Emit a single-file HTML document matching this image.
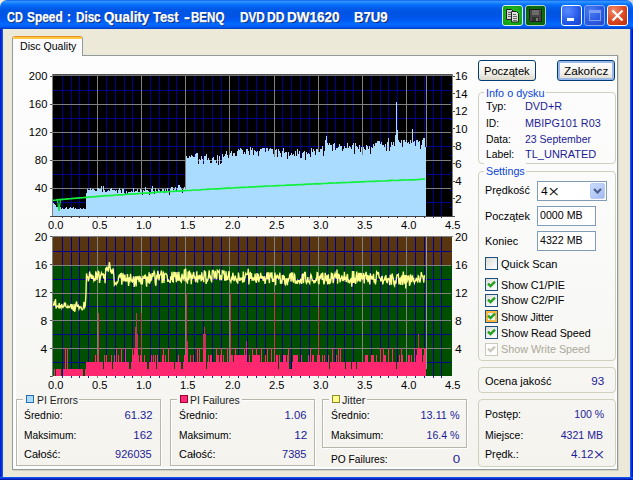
<!DOCTYPE html>
<html><head><meta charset="utf-8"><title>CD Speed : Disc Quality Test</title>
<style>
html,body{margin:0;padding:0}
body{width:633px;height:480px;overflow:hidden;background:#ece9d8;position:relative;font-family:"Liberation Sans",sans-serif;font-size:11px;color:#000}
.abs,.t,.tw,.gb,.cb,.inp,.btn,.sq{position:absolute;box-sizing:border-box}
.t{line-height:14px;height:14px;white-space:nowrap;color:#000}
.t.v{color:#1c1c96}
.t.gt{color:#0a46d8;background:transparent}
.t.dis{color:#aca899}
.t.ax{color:#000}
.t.st{color:#222}
.t.xx{font-size:19px;font-family:'Liberation Serif',serif}
.tw{top:8px;line-height:18px;font-weight:bold;font-size:14px;color:#fff;-webkit-text-stroke:0.25px #fff;text-shadow:1px 1px 0 #0a246a;white-space:nowrap}
#tb{left:0;top:0;width:633px;height:29px;border-radius:7px 7px 0 0;background:linear-gradient(#0058ee 0%,#3593ff 4%,#288eff 8%,#127dff 12%,#036ffc 17%,#0262ee 24%,#0057e5 34%,#0054e3 48%,#0055eb 60%,#005bf5 72%,#026afe 82%,#0061fc 90%,#0055ea 94%,#0048d5 97%,#003dc0 100%)}
#bl{left:0;top:29px;width:3px;height:451px;background:linear-gradient(90deg,#0019cf,#0831d9,#166aee)}
#br{left:630px;top:29px;width:3px;height:451px;background:linear-gradient(90deg,#166aee,#0831d9,#00138c)}
#bb{left:0;top:477px;width:633px;height:3px;background:linear-gradient(#166aee,#0831d9,#00138c)}
#panel{left:12px;top:55px;width:606px;height:415px;border:1px solid #919b9c;background:linear-gradient(#fdfdfe 0%,#fafaf9 45%,#f4f3ee 100%);box-shadow:1px 1px 0 #d5d2c3, inset 3px 0 0 #fdfdfd, inset -2px -2px 0 #fdfdfd}
#tab{left:12px;top:36px;width:71px;height:20px;border:1px solid #919b9c;border-bottom:none;border-top:none;border-radius:3px 3px 0 0;background:#fcfcfe;overflow:hidden}
#tab:before{content:"";position:absolute;left:0;top:0;width:100%;height:1px;background:#e68b2c}
#tab:after{content:"";position:absolute;left:0;top:1px;width:100%;height:2px;background:#ffc73c}
.gb{border:1px solid #d0d0bf;border-radius:4px;background:transparent}
.gbs{position:absolute;box-sizing:border-box;border:1px solid #b8b6a8;box-shadow:1px 1px 0 #fff, inset 1px 1px 0 #fff;background:transparent}
.mask{position:absolute;background:#f6f5f1}
.inp{border:1px solid #7f9db9;background:#fff}
.cb{width:13px;height:13px;border:1px solid #1c5180;background:linear-gradient(135deg,#dcdcd7,#fff)}
.cb.hot{border-color:#1c5180;box-shadow:inset 0 0 0 2px #f9b93c}
.cb.dis{border-color:#cac8bb;background:#fff}
.cb svg{position:absolute;left:0;top:0}
.btn{border:1px solid #003c74;border-radius:3px;background:linear-gradient(#fff 0%,#f3f2ec 60%,#dcd9cb 100%)}
.btn.def{box-shadow:inset 0 0 0 2px #9ab7ea}
.sq{width:8px;height:8px;border:1px solid}
.wb{position:absolute;box-sizing:border-box;top:5px;width:21px;height:21px;border:1px solid #fff;border-radius:3px}
svg.charts{position:absolute;left:0;top:0}
</style></head><body>
<div class="abs" style="left:0;top:0;width:7px;height:7px;background:#f6efd6"></div><div class="abs" style="left:626px;top:0;width:7px;height:7px;background:#d6d6de"></div>
<div id="tb" class="abs"></div>
<div id="bl" class="abs"></div><div id="br" class="abs"></div><div id="bb" class="abs"></div>
<span class="tw" id="w0" style="left:6.5px;transform-origin:0 0;transform:scaleX(0.7808)">CD</span><span class="tw" id="w1" style="left:26.6px;transform-origin:0 0;transform:scaleX(0.8497)">Speed</span><span class="tw" id="w2" style="left:67.3px;transform-origin:0 0;transform:scaleX(0.8562)">:</span><span class="tw" id="w3" style="left:75.7px;transform-origin:0 0;transform:scaleX(0.8317)">Disc</span><span class="tw" id="w4" style="left:103.8px;transform-origin:0 0;transform:scaleX(0.9522)">Quality</span><span class="tw" id="w5" style="left:153.10000000000002px;transform-origin:0 0;transform:scaleX(0.9225)">Test</span><span class="tw" id="w6" style="left:183.5px;transform-origin:0 0;transform:scaleX(1.2629)">-</span><span class="tw" id="w7" style="left:191.10000000000002px;transform-origin:0 0;transform:scaleX(0.8256)">BENQ</span><span class="tw" id="w8" style="left:239.5px;transform-origin:0 0;transform:scaleX(0.8389)">DVD</span><span class="tw" id="w9" style="left:266.90000000000003px;transform-origin:0 0;transform:scaleX(0.8649)">DD</span><span class="tw" id="w10" style="left:287.0px;transform-origin:0 0;transform:scaleX(0.9639)">DW1620</span><span class="tw" id="w11" style="left:354.2px;transform-origin:0 0;transform:scaleX(0.9386)">B7U9</span>
<div class="wb" style="left:502px;background:radial-gradient(circle at 50% 45%,#2cc42c,#0b980f);border-color:#dcf0dc">
<svg width="19" height="19" viewBox="0 0 19 19" style="position:absolute;left:0;top:0"><path d="M3.500,3.500h5l2,2v8h-7z" fill="#cfcfcf" stroke="#222"/><path d="M5,6.500h3M5,8.500h4M5,10.500h4" stroke="#6a6a6a" stroke-width="1"/><path d="M8.500,5.500h5l2,2v8.500h-7z" fill="#dcdcdc" stroke="#222"/><path d="M10,8.500h3M10,10.500h4M10,12.500h4M10,14.500h4" stroke="#6a6a6a" stroke-width="1"/></svg></div>
<div class="wb" style="left:525px;background:radial-gradient(circle at 50% 50%,#138a13,#06580a);border-color:#b4d4c0">
<svg width="19" height="19" viewBox="0 0 19 19" style="position:absolute;left:0;top:0"><path d="M3.500,3.500h12v12h-11l-1,-1z" fill="#474747" stroke="#1c1c1c"/><rect x="6" y="4" width="7" height="5" fill="#6c6c6c"/><rect x="6" y="11" width="7" height="4" fill="#303030"/><rect x="10" y="12" width="2" height="3" fill="#7a7a7a"/><rect x="14" y="4" width="1" height="1" fill="#2a9a2a"/></svg></div>
<div class="wb" style="left:561px;background:radial-gradient(circle at 30% 25%,#5a8cff,#2458e8 60%,#1a3fc8)"><div class="abs" style="left:5px;top:12px;width:7px;height:3px;background:#fff"></div></div>
<div class="wb" style="left:584px;background:radial-gradient(circle at 30% 25%,#4a7cf6,#2a5ae0 60%,#2347c8);border-color:#8aa8ee"><div class="abs" style="left:4px;top:4px;width:12px;height:11px;border:1px solid #7fa0f0;border-top-width:3px"></div></div>
<div class="wb" style="left:607px;background:radial-gradient(circle at 30% 25%,#f0896a,#d8441c 60%,#b8300c)"><svg width="19" height="19" style="position:absolute;left:0;top:0"><path d="M4.500,4.500l10,10M14.500,4.500l-10,10" stroke="#fff" stroke-width="2.2" stroke-linecap="butt"/></svg></div>

<div id="panel" class="abs"></div>
<div id="tab" class="abs"></div>

<div class="btn" style="left:478px;top:60px;width:58px;height:21px"></div>
<div class="btn def" style="left:557px;top:60px;width:58px;height:21px"></div>

<div class="gb" style="left:478px;top:92px;width:138px;height:72px"></div>
<div class="mask" style="left:484px;top:88px;width:62px;height:10px;background:#fcfcfd"></div>
<div class="gb" style="left:478px;top:171px;width:138px;height:190px"></div>
<div class="mask" style="left:484px;top:163px;width:42px;height:14px;background:#fbfbfb"></div>
<div class="gb" style="left:478px;top:367px;width:138px;height:26px"></div>
<div class="gb" style="left:478px;top:399px;width:138px;height:68px"></div>

<div class="inp" style="left:537px;top:181px;width:70px;height:20px"><div class="abs" style="right:1px;top:1px;width:15px;height:16px;border-radius:2px;background:linear-gradient(135deg,#cadafd,#b4c9f8 60%,#9fb9f0);border:1px solid #b9ccf6"><svg width="13" height="14" style="position:absolute;left:0;top:0"><path d="M3,5l3.500,3.500l3.500,-3.500" fill="none" stroke="#4a5e86" stroke-width="2.200"/></svg></div></div>
<div class="inp" style="left:537px;top:206px;width:59px;height:20px"></div>
<div class="inp" style="left:537px;top:231px;width:59px;height:20px"></div>

<div class="cb" style="left:485px;top:257px"></div>
<div class="cb" style="left:485px;top:278px"><svg width="11" height="11"><path d="M2,4.600l2.500,2.500l4.500,-4.500" fill="none" stroke="#21a121" stroke-width="2.300"/></svg></div>
<div class="cb" style="left:485px;top:294px"><svg width="11" height="11"><path d="M2,4.600l2.500,2.500l4.500,-4.500" fill="none" stroke="#21a121" stroke-width="2.300"/></svg></div>
<div class="cb hot" style="left:485px;top:310px"><svg width="11" height="11"><path d="M2,4.600l2.500,2.500l4.500,-4.500" fill="none" stroke="#21a121" stroke-width="2.300"/></svg></div>
<div class="cb" style="left:485px;top:326px"><svg width="11" height="11"><path d="M2,4.600l2.500,2.500l4.500,-4.500" fill="none" stroke="#21a121" stroke-width="2.300"/></svg></div>
<div class="cb dis" style="left:485px;top:343px"><svg width="11" height="11"><path d="M2,4.600l2.500,2.500l4.500,-4.500" fill="none" stroke="#cac8bb" stroke-width="2.300"/></svg></div>

<div class="gbs" style="left:16px;top:399px;width:145px;height:67px"></div>
<div class="mask" style="left:23px;top:398px;width:56px;height:3px"></div>
<div class="gbs" style="left:170px;top:399px;width:145px;height:67px"></div>
<div class="mask" style="left:177px;top:398px;width:65px;height:3px"></div>
<div class="gbs" style="left:322px;top:399px;width:145px;height:49px"></div>
<div class="mask" style="left:329px;top:398px;width:38px;height:3px"></div>
<div class="sq" style="left:26px;top:395px;background:#aadcff;border-color:#2a6cb0"></div>
<div class="sq" style="left:180px;top:395px;background:#ff2a75;border-color:#a00030"></div>
<div class="sq" style="left:332px;top:395px;background:#ffff8c;border-color:#8c8c28"></div>

<svg class="charts" width="633" height="480" viewBox="0 0 633 480" shape-rendering="crispEdges"><rect x="53" y="74" width="399" height="142" fill="#000"/><rect x="62" y="76" width="1" height="140" fill="#00008c"/><rect x="71" y="76" width="1" height="140" fill="#00008c"/><rect x="79" y="76" width="1" height="140" fill="#00008c"/><rect x="88" y="76" width="1" height="140" fill="#00008c"/><rect x="106" y="76" width="1" height="140" fill="#00008c"/><rect x="115" y="76" width="1" height="140" fill="#00008c"/><rect x="124" y="76" width="1" height="140" fill="#00008c"/><rect x="132" y="76" width="1" height="140" fill="#00008c"/><rect x="150" y="76" width="1" height="140" fill="#00008c"/><rect x="159" y="76" width="1" height="140" fill="#00008c"/><rect x="168" y="76" width="1" height="140" fill="#00008c"/><rect x="176" y="76" width="1" height="140" fill="#00008c"/><rect x="194" y="76" width="1" height="140" fill="#00008c"/><rect x="203" y="76" width="1" height="140" fill="#00008c"/><rect x="212" y="76" width="1" height="140" fill="#00008c"/><rect x="221" y="76" width="1" height="140" fill="#00008c"/><rect x="238" y="76" width="1" height="140" fill="#00008c"/><rect x="247" y="76" width="1" height="140" fill="#00008c"/><rect x="256" y="76" width="1" height="140" fill="#00008c"/><rect x="265" y="76" width="1" height="140" fill="#00008c"/><rect x="282" y="76" width="1" height="140" fill="#00008c"/><rect x="291" y="76" width="1" height="140" fill="#00008c"/><rect x="300" y="76" width="1" height="140" fill="#00008c"/><rect x="309" y="76" width="1" height="140" fill="#00008c"/><rect x="327" y="76" width="1" height="140" fill="#00008c"/><rect x="335" y="76" width="1" height="140" fill="#00008c"/><rect x="344" y="76" width="1" height="140" fill="#00008c"/><rect x="353" y="76" width="1" height="140" fill="#00008c"/><rect x="371" y="76" width="1" height="140" fill="#00008c"/><rect x="380" y="76" width="1" height="140" fill="#00008c"/><rect x="388" y="76" width="1" height="140" fill="#00008c"/><rect x="397" y="76" width="1" height="140" fill="#00008c"/><rect x="415" y="76" width="1" height="140" fill="#00008c"/><rect x="424" y="76" width="1" height="140" fill="#00008c"/><rect x="433" y="76" width="1" height="140" fill="#00008c"/><rect x="441" y="76" width="1" height="140" fill="#00008c"/><rect x="53" y="90" width="398" height="1" fill="#00008c"/><rect x="53" y="118" width="398" height="1" fill="#00008c"/><rect x="53" y="146" width="398" height="1" fill="#00008c"/><rect x="53" y="174" width="398" height="1" fill="#00008c"/><rect x="53" y="202" width="398" height="1" fill="#00008c"/><rect x="97" y="76" width="1" height="140" fill="#808080"/><rect x="141" y="76" width="1" height="140" fill="#808080"/><rect x="185" y="76" width="1" height="140" fill="#808080"/><rect x="229" y="76" width="1" height="140" fill="#808080"/><rect x="274" y="76" width="1" height="140" fill="#808080"/><rect x="318" y="76" width="1" height="140" fill="#808080"/><rect x="362" y="76" width="1" height="140" fill="#808080"/><rect x="406" y="76" width="1" height="140" fill="#808080"/><rect x="53" y="104" width="398" height="1" fill="#808080"/><rect x="53" y="132" width="398" height="1" fill="#808080"/><rect x="53" y="160" width="398" height="1" fill="#808080"/><rect x="53" y="188" width="398" height="1" fill="#808080"/><rect x="426" y="76" width="1" height="71" fill="#8c8c8c"/><path d="M53,216V203H54V204H55V205H56V207H57V207H58V207H59V208H60V207H61V209H62V208H63V209H64V209H65V208H66V207H67V209H68V209H69V208H70V207H71V208H72V208H73V207H74V209H75V208H76V209H77V209H78V209H79V209H80V208H81V209H82V209H83V208H84V209H85V209H86V193H87V189H88V190H89V190H90V188H91V190H92V189H93V189H94V190H95V191H96V191H97V188H98V188H99V189H100V189H101V186H102V192H103V186H104V190H105V192H106V192H107V191H108V190H109V191H110V189H111V188H112V190H113V190H114V190H115V191H116V190H117V193H118V190H119V188H120V190H121V193H122V189H123V189H124V193H125V194H126V191H127V194H128V192H129V192H130V192H131V191H132V192H133V188H134V192H135V191H136V191H137V189H138V192H139V192H140V189H141V190H142V195H143V190H144V191H145V187H146V190H147V190H148V191H149V195H150V192H151V189H152V186H153V191H154V194H155V188H156V191H157V193H158V189H159V190H160V192H161V191H162V189H163V189H164V193H165V189H166V192H167V188H168V191H169V195H170V189H171V187H172V187H173V190H174V189H175V187H176V192H177V188H178V185H179V185H180V187H181V189H182V193H183V189H184V187H185V189H186V156H187V158H188V158H189V156H190V157H191V155H192V156H193V157H194V157H195V154H196V153H197V153H198V164H199V159H200V160H201V156H202V159H203V164H204V156H205V156H206V154H207V160H208V158H209V160H210V163H211V163H212V158H213V157H214V160H215V160H216V163H217V155H218V165H219V156H220V164H221V163H222V154H223V157H224V156H225V154H226V151H227V155H228V158H229V155H230V153H231V151H232V156H233V153H234V153H235V156H236V156H237V151H238V149H239V150H240V148H241V149H242V150H243V154H244V152H245V154H246V149H247V149H248V151H249V155H250V147H251V150H252V148H253V155H254V150H255V151H256V152H257V151H258V156H259V151H260V149H261V149H262V148H263V148H264V148H265V152H266V148H267V148H268V151H269V149H270V148H271V149H272V149H273V154H274V157H275V150H276V149H277V157H278V149H279V151H280V153H281V157H282V151H283V148H284V153H285V152H286V152H287V159H288V152H289V156H290V155H291V153H292V155H293V154H294V156H295V151H296V156H297V149H298V154H299V151H300V158H301V158H302V153H303V152H304V151H305V160H306V152H307V154H308V153H309V154H310V157H311V148H312V152H313V149H314V151H315V155H316V149H317V149H318V152H319V152H320V149H321V149H322V146H323V156H324V151H325V140H326V136H327V143H328V145H329V143H330V145H331V145H332V151H333V144H334V143H335V150H336V148H337V148H338V147H339V144H340V146H341V146H342V151H343V149H344V146H345V148H346V148H347V143H348V148H349V146H350V147H351V149H352V145H353V143H354V154H355V143H356V146H357V147H358V149H359V145H360V152H361V147H362V155H363V147H364V149H365V150H366V145H367V146H368V149H369V146H370V154H371V147H372V148H373V144H374V146H375V143H376V143H377V141H378V141H379V141H380V144H381V142H382V145H383V145H384V147H385V144H386V151H387V142H388V138H389V151H390V147H391V142H392V145H393V142H394V146H395V135H396V102H397V130H398V140H399V142H400V143H401V140H402V147H403V140H404V140H405V142H406V140H407V143H408V142H409V144H410V140H411V143H412V129H413V142H414V141H415V146H416V140H417V140H418V142H419V141H420V149H421V145H422V140H423V138H424V138H425V147H426V216Z" fill="#aadcff"/><polyline points="53,200.3 56,200.0 59,199.6 62,199.4 65,199.2 68,198.9 71,198.7 74,198.4 77,198.1 80,197.8 83,197.7 86,197.3 89,197.1 92,196.9 95,196.7 98,196.3 101,196.1 104,195.9 107,195.7 110,195.6 113,195.3 116,195.0 119,194.8 122,194.8 125,194.5 128,194.2 131,194.1 134,193.9 137,193.8 140,193.3 143,193.2 146,193.1 149,192.9 152,192.8 155,192.4 158,192.2 161,192.0 164,191.8 167,191.8 170,191.5 173,191.4 176,191.1 179,191.1 182,190.8 185,190.6 188,190.5 191,190.4 194,190.0 197,190.0 200,189.8 203,189.5 206,189.4 209,189.2 212,189.0 215,188.9 218,188.8 221,188.6 224,188.4 227,188.2 230,188.1 233,188.0 236,187.7 239,187.6 242,187.4 245,187.4 248,187.2 251,186.9 254,186.8 257,186.7 260,186.6 263,186.4 266,186.2 269,186.0 272,186.0 275,185.8 278,185.6 281,185.5 284,185.5 287,185.2 290,185.1 293,184.9 296,184.8 299,184.7 302,184.6 305,184.3 308,184.2 311,184.1 314,183.9 317,183.7 320,183.8 323,183.5 326,183.5 329,183.2 332,183.2 335,183.0 338,182.8 341,182.6 344,182.6 347,182.5 350,182.4 353,182.1 356,182.1 359,181.9 362,181.8 365,181.6 368,181.5 371,181.4 374,181.4 377,181.1 380,181.0 383,181.0 386,180.9 389,180.6 392,180.4 395,180.5 398,180.4 401,180.1 404,179.9 407,180.0 410,179.8 413,179.8 416,179.6 419,179.5 422,179.2 425,179.2" fill="none" stroke="#10f03c" stroke-width="1.7" shape-rendering="auto"/><polyline points="57.500,200 59,211 60.500,199.500" fill="none" stroke="#10e040" stroke-width="1.300" shape-rendering="auto"/><rect x="52" y="74" width="401" height="1" fill="#505050"/><rect x="52" y="75" width="401" height="1" fill="#707070"/><rect x="52" y="74" width="1" height="143" fill="#808080"/><rect x="452" y="74" width="1" height="143" fill="#808080"/><rect x="52" y="216" width="401" height="1" fill="#404040"/><rect x="50" y="76" width="2" height="1" fill="#505050"/><rect x="50" y="104" width="2" height="1" fill="#505050"/><rect x="50" y="132" width="2" height="1" fill="#505050"/><rect x="50" y="160" width="2" height="1" fill="#505050"/><rect x="50" y="188" width="2" height="1" fill="#505050"/><rect x="50" y="216" width="2" height="1" fill="#505050"/><rect x="453" y="76" width="2" height="1" fill="#505050"/><rect x="453" y="93" width="2" height="1" fill="#505050"/><rect x="453" y="111" width="2" height="1" fill="#505050"/><rect x="453" y="128" width="2" height="1" fill="#505050"/><rect x="453" y="146" width="2" height="1" fill="#505050"/><rect x="453" y="163" width="2" height="1" fill="#505050"/><rect x="453" y="181" width="2" height="1" fill="#505050"/><rect x="453" y="198" width="2" height="1" fill="#505050"/><rect x="453" y="216" width="2" height="1" fill="#505050"/><rect x="450" y="84" width="2" height="1" fill="#0000a0"/><rect x="450" y="102" width="2" height="1" fill="#0000a0"/><rect x="450" y="119" width="2" height="1" fill="#0000a0"/><rect x="450" y="137" width="2" height="1" fill="#0000a0"/><rect x="450" y="155" width="2" height="1" fill="#0000a0"/><rect x="450" y="172" width="2" height="1" fill="#0000a0"/><rect x="450" y="190" width="2" height="1" fill="#0000a0"/><rect x="450" y="207" width="2" height="1" fill="#0000a0"/><rect x="53" y="237" width="399" height="139" fill="#004e00"/><rect x="53" y="237" width="399" height="28" fill="#563510"/><rect x="62" y="237" width="1" height="139" fill="#00008c"/><rect x="71" y="237" width="1" height="139" fill="#00008c"/><rect x="79" y="237" width="1" height="139" fill="#00008c"/><rect x="88" y="237" width="1" height="139" fill="#00008c"/><rect x="106" y="237" width="1" height="139" fill="#00008c"/><rect x="115" y="237" width="1" height="139" fill="#00008c"/><rect x="124" y="237" width="1" height="139" fill="#00008c"/><rect x="132" y="237" width="1" height="139" fill="#00008c"/><rect x="150" y="237" width="1" height="139" fill="#00008c"/><rect x="159" y="237" width="1" height="139" fill="#00008c"/><rect x="168" y="237" width="1" height="139" fill="#00008c"/><rect x="176" y="237" width="1" height="139" fill="#00008c"/><rect x="194" y="237" width="1" height="139" fill="#00008c"/><rect x="203" y="237" width="1" height="139" fill="#00008c"/><rect x="212" y="237" width="1" height="139" fill="#00008c"/><rect x="221" y="237" width="1" height="139" fill="#00008c"/><rect x="238" y="237" width="1" height="139" fill="#00008c"/><rect x="247" y="237" width="1" height="139" fill="#00008c"/><rect x="256" y="237" width="1" height="139" fill="#00008c"/><rect x="265" y="237" width="1" height="139" fill="#00008c"/><rect x="282" y="237" width="1" height="139" fill="#00008c"/><rect x="291" y="237" width="1" height="139" fill="#00008c"/><rect x="300" y="237" width="1" height="139" fill="#00008c"/><rect x="309" y="237" width="1" height="139" fill="#00008c"/><rect x="327" y="237" width="1" height="139" fill="#00008c"/><rect x="335" y="237" width="1" height="139" fill="#00008c"/><rect x="344" y="237" width="1" height="139" fill="#00008c"/><rect x="353" y="237" width="1" height="139" fill="#00008c"/><rect x="371" y="237" width="1" height="139" fill="#00008c"/><rect x="380" y="237" width="1" height="139" fill="#00008c"/><rect x="388" y="237" width="1" height="139" fill="#00008c"/><rect x="397" y="237" width="1" height="139" fill="#00008c"/><rect x="415" y="237" width="1" height="139" fill="#00008c"/><rect x="424" y="237" width="1" height="139" fill="#00008c"/><rect x="433" y="237" width="1" height="139" fill="#00008c"/><rect x="441" y="237" width="1" height="139" fill="#00008c"/><rect x="53" y="251" width="398" height="1" fill="#00008c"/><rect x="53" y="279" width="398" height="1" fill="#00008c"/><rect x="53" y="306" width="398" height="1" fill="#00008c"/><rect x="53" y="334" width="398" height="1" fill="#00008c"/><rect x="53" y="362" width="398" height="1" fill="#00008c"/><rect x="97" y="237" width="1" height="139" fill="#808080"/><rect x="141" y="237" width="1" height="139" fill="#808080"/><rect x="185" y="237" width="1" height="139" fill="#808080"/><rect x="229" y="237" width="1" height="139" fill="#808080"/><rect x="274" y="237" width="1" height="139" fill="#808080"/><rect x="318" y="237" width="1" height="139" fill="#808080"/><rect x="362" y="237" width="1" height="139" fill="#808080"/><rect x="406" y="237" width="1" height="139" fill="#808080"/><rect x="53" y="265" width="398" height="1" fill="#808080"/><rect x="53" y="293" width="398" height="1" fill="#808080"/><rect x="53" y="320" width="398" height="1" fill="#808080"/><rect x="53" y="348" width="398" height="1" fill="#808080"/><rect x="426" y="237" width="1" height="132" fill="#9a9a9a"/><path d="M53,376V376H54V369H55V376H56V369H57V369H58V369H59V369H60V369H61V376H62V376H63V369H64V369H65V348H66V369H67V348H68V369H69V369H70V369H71V369H72V369H73V369H74V369H75V369H76V369H77V369H78V369H79V369H80V369H81V369H82V369H83V376H84V376H85V369H86V362H87V362H88V362H89V362H90V362H91V362H92V362H93V362H94V362H95V355H96V362H97V355H98V313H99V362H100V362H101V362H102V362H103V369H104V355H105V362H106V355H107V362H108V362H109V362H110V362H111V355H112V369H113V362H114V355H115V362H116V348H117V362H118V355H119V362H120V362H121V348H122V362H123V362H124V362H125V348H126V362H127V362H128V362H129V369H130V369H131V362H132V348H133V355H134V348H135V327H136V313H137V334H138V355H139V362H140V355H141V313H142V362H143V362H144V355H145V362H146V362H147V369H148V369H149V362H150V362H151V355H152V362H153V355H154V362H155V355H156V369H157V355H158V362H159V362H160V362H161V362H162V355H163V348H164V362H165V355H166V362H167V362H168V348H169V362H170V362H171V362H172V362H173V362H174V369H175V362H176V362H177V362H178V355H179V362H180V362H181V369H182V369H183V362H184V355H185V355H186V293H187V341H188V362H189V362H190V355H191V362H192V362H193V355H194V362H195V362H196V362H197V348H198V362H199V348H200V362H201V362H202V362H203V334H204V327H205V334H206V369H207V362H208V355H209V362H210V355H211V355H212V362H213V362H214V362H215V362H216V348H217V355H218V355H219V362H220V355H221V348H222V362H223V355H224V362H225V362H226V362H227V348H228V362H229V362H230V293H231V355H232V355H233V362H234V355H235V348H236V355H237V355H238V355H239V355H240V355H241V355H242V355H243V355H244V348H245V355H246V341H247V362H248V362H249V355H250V362H251V362H252V348H253V355H254V355H255V355H256V348H257V355H258V355H259V355H260V362H261V348H262V362H263V362H264V362H265V355H266V362H267V348H268V362H269V362H270V362H271V348H272V362H273V362H274V293H275V362H276V355H277V355H278V369H279V355H280V362H281V362H282V362H283V355H284V355H285V355H286V362H287V355H288V348H289V369H290V369H291V369H292V362H293V355H294V355H295V355H296V355H297V355H298V362H299V362H300V362H301V355H302V362H303V362H304V362H305V362H306V362H307V362H308V355H309V362H310V348H311V362H312V355H313V355H314V362H315V362H316V362H317V355H318V306H319V355H320V362H321V362H322V355H323V362H324V355H325V362H326V362H327V362H328V355H329V369H330V362H331V362H332V348H333V362H334V362H335V362H336V355H337V362H338V348H339V362H340V348H341V362H342V362H343V362H344V362H345V369H346V362H347V362H348V362H349V362H350V362H351V369H352V362H353V362H354V362H355V362H356V369H357V362H358V362H359V362H360V362H361V362H362V362H363V362H364V362H365V355H366V355H367V355H368V362H369V362H370V362H371V355H372V355H373V355H374V362H375V362H376V355H377V362H378V362H379V362H380V348H381V362H382V362H383V348H384V355H385V355H386V362H387V362H388V348H389V362H390V362H391V362H392V348H393V362H394V362H395V362H396V369H397V362H398V362H399V355H400V362H401V348H402V355H403V362H404V362H405V362H406V362H407V362H408V355H409V355H410V362H411V355H412V362H413V362H414V348H415V362H416V355H417V348H418V334H419V348H420V348H421V348H422V362H423V355H424V348H425V348H426V376Z" fill="#ff2870"/><rect x="98" y="313" width="1" height="35" fill="#c8305c"/><rect x="135" y="327" width="1" height="21" fill="#c8305c"/><rect x="136" y="313" width="1" height="35" fill="#c8305c"/><rect x="137" y="334" width="1" height="14" fill="#c8305c"/><rect x="141" y="313" width="1" height="35" fill="#c8305c"/><rect x="186" y="293" width="1" height="55" fill="#c8305c"/><rect x="187" y="341" width="1" height="7" fill="#c8305c"/><rect x="203" y="334" width="1" height="14" fill="#c8305c"/><rect x="204" y="327" width="1" height="21" fill="#c8305c"/><rect x="205" y="334" width="1" height="14" fill="#c8305c"/><rect x="230" y="293" width="1" height="55" fill="#c8305c"/><rect x="246" y="341" width="1" height="7" fill="#c8305c"/><rect x="274" y="293" width="1" height="55" fill="#c8305c"/><rect x="318" y="306" width="1" height="42" fill="#c8305c"/><rect x="418" y="334" width="1" height="14" fill="#c8305c"/><polyline points="53.0,304.3 53.6,305.0 54.2,302.6 54.9,304.2 55.5,299.1 56.1,308.4 56.7,306.8 57.3,305.9 58.0,306.4 58.6,307.2 59.2,303.0 59.8,307.3 60.4,306.3 61.1,307.9 61.7,304.0 62.3,306.0 62.9,307.5 63.5,306.8 64.2,304.1 64.8,306.2 65.4,302.6 66.0,307.0 66.6,307.5 67.3,307.7 67.9,306.0 68.5,307.6 69.1,307.5 69.7,306.8 70.4,305.5 71.0,304.0 71.6,309.2 72.2,304.3 72.8,308.8 73.5,310.7 74.1,304.1 74.7,311.8 75.3,308.4 75.9,303.9 76.6,301.5 77.2,306.4 77.8,306.1 78.4,305.4 79.0,308.9 79.7,307.0 80.3,307.6 80.9,306.9 81.5,308.8 82.1,309.8 82.8,309.3 83.4,307.2 84.0,301.8 84.6,307.4 85.2,306.0 85.9,295.6 86.5,273.5 87.1,276.4 87.7,276.8 88.3,281.3 89.0,278.8 89.6,271.5 90.2,277.1 90.8,273.8 91.4,278.8 92.1,274.8 92.7,279.1 93.3,277.4 93.9,280.8 94.5,279.2 95.2,280.8 95.8,271.4 96.4,273.7 97.0,279.9 97.6,276.2 98.3,271.3 98.9,272.0 99.5,282.9 100.1,279.3 100.7,275.3 101.4,272.8 102.0,274.7 102.6,274.0 103.2,273.8 103.8,278.3 104.5,274.4 105.1,283.1 105.7,269.1 106.3,269.9 106.9,266.7 107.6,269.1 108.2,271.6 108.8,266.9 109.4,262.0 110.0,266.2 110.7,272.4 111.3,269.7 111.9,273.9 112.5,272.2 113.1,268.3 113.8,275.3 114.4,284.9 115.0,283.8 115.6,283.1 116.2,284.4 116.9,282.2 117.5,282.8 118.1,280.9 118.7,276.7 119.3,275.3 120.0,276.8 120.6,273.9 121.2,273.5 121.8,284.7 122.4,277.4 123.1,273.2 123.7,281.3 124.3,278.8 124.9,274.6 125.5,281.7 126.2,278.2 126.8,281.5 127.4,274.1 128.0,279.2 128.6,285.9 129.3,277.4 129.9,282.4 130.5,273.9 131.1,278.9 131.7,281.2 132.4,281.9 133.0,279.0 133.6,276.3 134.2,287.0 134.8,281.4 135.5,276.3 136.1,286.5 136.7,276.4 137.3,279.6 137.9,276.0 138.6,278.2 139.2,282.2 139.8,276.8 140.4,277.4 141.0,284.3 141.7,278.3 142.3,284.4 142.9,277.0 143.5,277.8 144.1,276.4 144.8,278.8 145.4,274.6 146.0,279.9 146.6,286.6 147.2,276.6 147.9,278.2 148.5,283.1 149.1,272.2 149.7,283.8 150.3,273.7 151.0,280.3 151.6,279.6 152.2,273.1 152.8,276.9 153.4,273.9 154.1,271.5 154.7,273.1 155.3,283.4 155.9,285.8 156.5,276.5 157.2,277.7 157.8,270.8 158.4,274.0 159.0,280.3 159.6,275.2 160.3,274.8 160.9,273.2 161.5,270.5 162.1,283.1 162.7,278.9 163.4,271.6 164.0,282.9 164.6,274.1 165.2,273.9 165.8,273.4 166.5,274.4 167.1,275.5 167.7,281.9 168.3,280.1 168.9,281.0 169.6,281.3 170.2,283.0 170.8,276.4 171.4,280.2 172.0,271.7 172.7,281.3 173.3,281.8 173.9,271.9 174.5,277.0 175.1,272.1 175.8,277.4 176.4,282.2 177.0,272.0 177.6,279.4 178.2,280.8 178.9,271.7 179.5,280.6 180.1,278.6 180.7,281.2 181.3,282.0 182.0,273.9 182.6,276.3 183.2,279.2 183.8,277.8 184.4,269.4 185.1,281.3 185.7,268.5 186.3,278.7 186.9,282.3 187.5,282.9 188.2,271.6 188.8,280.2 189.4,270.6 190.0,278.2 190.6,272.5 191.3,284.1 191.9,274.7 192.5,279.1 193.1,274.6 193.7,272.0 194.4,277.8 195.0,277.4 195.6,282.1 196.2,278.4 196.8,271.4 197.5,282.6 198.1,276.6 198.7,276.1 199.3,279.3 199.9,274.9 200.6,277.0 201.2,281.3 201.8,272.2 202.4,278.7 203.0,277.9 203.7,282.2 204.3,270.4 204.9,276.3 205.5,271.4 206.1,284.0 206.8,279.8 207.4,280.8 208.0,279.6 208.6,275.5 209.2,270.3 209.9,277.4 210.5,276.7 211.1,280.4 211.7,281.4 212.3,271.1 213.0,270.2 213.6,270.9 214.2,277.7 214.8,276.4 215.4,270.9 216.1,278.9 216.7,278.9 217.3,270.4 217.9,271.3 218.5,272.0 219.2,270.8 219.8,280.1 220.4,275.1 221.0,277.1 221.6,280.3 222.3,270.7 222.9,271.1 223.5,272.8 224.1,270.5 224.7,280.0 225.4,280.0 226.0,271.4 226.6,280.3 227.2,277.9 227.8,279.8 228.5,274.2 229.1,271.0 229.7,280.1 230.3,280.3 230.9,282.0 231.6,278.4 232.2,280.1 232.8,272.7 233.4,276.3 234.0,281.1 234.7,277.7 235.3,275.7 235.9,279.7 236.5,280.9 237.1,278.8 237.8,283.7 238.4,272.5 239.0,276.6 239.6,280.2 240.2,280.1 240.9,278.3 241.5,279.3 242.1,278.3 242.7,282.7 243.3,271.5 244.0,282.1 244.6,279.5 245.2,276.1 245.8,273.4 246.4,274.5 247.1,274.3 247.7,274.0 248.3,268.7 248.9,284.4 249.5,276.7 250.2,271.8 250.8,279.0 251.4,273.0 252.0,279.5 252.6,278.5 253.3,280.7 253.9,277.3 254.5,280.4 255.1,273.5 255.7,280.8 256.4,282.8 257.0,273.0 257.6,280.5 258.2,273.8 258.8,282.2 259.5,277.3 260.1,277.5 260.7,272.8 261.3,277.9 261.9,278.2 262.6,276.0 263.2,280.4 263.8,280.5 264.4,276.2 265.0,283.9 265.7,279.9 266.3,277.6 266.9,272.5 267.5,279.5 268.1,272.2 268.8,278.3 269.4,283.1 270.0,272.5 270.6,274.8 271.2,276.4 271.9,272.4 272.5,282.0 273.1,278.8 273.7,281.8 274.3,277.6 275.0,272.5 275.6,285.1 276.2,275.3 276.8,278.5 277.4,274.6 278.1,277.0 278.7,278.5 279.3,277.3 279.9,272.7 280.5,283.8 281.2,279.8 281.8,283.7 282.4,275.1 283.0,280.1 283.6,275.8 284.3,276.5 284.9,283.7 285.5,284.6 286.1,278.2 286.7,279.9 287.4,285.1 288.0,278.1 288.6,280.0 289.2,278.3 289.8,274.4 290.5,273.8 291.1,281.7 291.7,273.0 292.3,273.1 292.9,280.4 293.6,282.6 294.2,274.0 294.8,275.0 295.4,283.2 296.0,283.0 296.7,281.6 297.3,283.9 297.9,280.3 298.5,281.3 299.1,280.7 299.8,282.8 300.4,280.6 301.0,278.8 301.6,284.0 302.2,274.7 302.9,274.2 303.5,283.1 304.1,275.6 304.7,272.5 305.3,272.5 306.0,282.1 306.6,283.3 307.2,281.6 307.8,277.2 308.4,281.7 309.1,282.1 309.7,283.3 310.3,277.7 310.9,274.7 311.5,276.2 312.2,280.7 312.8,280.3 313.4,280.5 314.0,283.3 314.6,280.0 315.3,282.6 315.9,279.6 316.5,280.9 317.1,272.6 317.7,273.0 318.4,282.9 319.0,284.2 319.6,275.8 320.2,279.1 320.8,275.3 321.5,273.4 322.1,280.0 322.7,272.5 323.3,279.6 323.9,284.3 324.6,281.3 325.2,272.8 325.8,277.0 326.4,281.1 327.0,275.4 327.7,284.4 328.3,274.2 328.9,283.9 329.5,278.9 330.1,282.9 330.8,281.6 331.4,272.6 332.0,279.2 332.6,273.4 333.2,283.2 333.9,278.8 334.5,275.2 335.1,273.4 335.7,276.4 336.3,278.7 337.0,269.5 337.6,283.7 338.2,273.6 338.8,277.1 339.4,275.9 340.1,282.3 340.7,278.8 341.3,278.1 341.9,275.4 342.5,281.0 343.2,278.3 343.8,279.6 344.4,271.9 345.0,279.8 345.6,276.9 346.3,281.9 346.9,276.2 347.5,274.0 348.1,282.6 348.7,279.4 349.4,283.3 350.0,281.5 350.6,279.9 351.2,277.9 351.8,286.6 352.5,271.0 353.1,282.9 353.7,271.1 354.3,282.6 354.9,277.9 355.6,283.9 356.2,275.5 356.8,271.6 357.4,280.7 358.0,279.5 358.7,272.9 359.3,281.5 359.9,272.8 360.5,281.7 361.1,273.0 361.8,276.4 362.4,279.7 363.0,276.7 363.6,273.1 364.2,283.5 364.9,275.8 365.5,274.9 366.1,271.8 366.7,279.6 367.3,274.8 368.0,282.2 368.6,276.1 369.2,276.5 369.8,284.5 370.4,273.3 371.1,279.0 371.7,275.9 372.3,279.2 372.9,279.0 373.5,273.9 374.2,282.7 374.8,279.1 375.4,284.4 376.0,280.7 376.6,272.2 377.3,273.7 377.9,272.5 378.5,272.8 379.1,277.2 379.7,277.8 380.4,279.0 381.0,281.5 381.6,276.8 382.2,276.5 382.8,284.4 383.5,280.7 384.1,280.1 384.7,278.2 385.3,280.4 385.9,275.0 386.6,282.2 387.2,282.6 387.8,278.6 388.4,278.3 389.0,279.2 389.7,285.1 390.3,274.7 390.9,276.7 391.5,284.7 392.1,273.5 392.8,276.7 393.4,278.9 394.0,284.6 394.6,285.7 395.2,280.7 395.9,283.8 396.5,277.3 397.1,274.9 397.7,275.2 398.3,274.5 399.0,284.4 399.6,282.0 400.2,277.5 400.8,284.9 401.4,276.7 402.1,275.9 402.7,285.0 403.3,271.6 403.9,277.4 404.5,283.7 405.2,275.1 405.8,288.5 406.4,275.0 407.0,282.3 407.6,277.4 408.3,278.9 408.9,275.3 409.5,285.7 410.1,283.9 410.7,274.3 411.4,282.2 412.0,276.8 412.6,276.1 413.2,280.5 413.8,279.3 414.5,282.8 415.1,281.0 415.7,280.8 416.3,277.9 416.9,280.0 417.6,281.4 418.2,275.8 418.8,276.5 419.4,281.7 420.0,282.0 420.7,278.6 421.3,272.1 421.9,275.8 422.5,275.9 423.1,277.9 423.8,282.7 424.4,275.1" fill="none" stroke="#ffff90" stroke-width="1.350" shape-rendering="auto"/><rect x="52" y="236" width="401" height="1" fill="#808080"/><rect x="52" y="236" width="1" height="141" fill="#808080"/><rect x="50" y="236" width="2" height="1" fill="#505050"/><rect x="50" y="264" width="2" height="1" fill="#505050"/><rect x="50" y="292" width="2" height="1" fill="#505050"/><rect x="50" y="320" width="2" height="1" fill="#505050"/><rect x="50" y="348" width="2" height="1" fill="#505050"/><rect x="50" y="376" width="2" height="1" fill="#505050"/><rect x="62" y="376" width="1" height="2" fill="#2020a0"/><rect x="62" y="217" width="1" height="1" fill="#2020a0"/><rect x="71" y="376" width="1" height="2" fill="#2020a0"/><rect x="71" y="217" width="1" height="1" fill="#2020a0"/><rect x="79" y="376" width="1" height="2" fill="#2020a0"/><rect x="79" y="217" width="1" height="1" fill="#2020a0"/><rect x="88" y="376" width="1" height="2" fill="#2020a0"/><rect x="88" y="217" width="1" height="1" fill="#2020a0"/><rect x="97" y="376" width="1" height="2" fill="#808080"/><rect x="97" y="217" width="1" height="1" fill="#808080"/><rect x="106" y="376" width="1" height="2" fill="#2020a0"/><rect x="106" y="217" width="1" height="1" fill="#2020a0"/><rect x="115" y="376" width="1" height="2" fill="#2020a0"/><rect x="115" y="217" width="1" height="1" fill="#2020a0"/><rect x="124" y="376" width="1" height="2" fill="#2020a0"/><rect x="124" y="217" width="1" height="1" fill="#2020a0"/><rect x="132" y="376" width="1" height="2" fill="#2020a0"/><rect x="132" y="217" width="1" height="1" fill="#2020a0"/><rect x="141" y="376" width="1" height="2" fill="#808080"/><rect x="141" y="217" width="1" height="1" fill="#808080"/><rect x="150" y="376" width="1" height="2" fill="#2020a0"/><rect x="150" y="217" width="1" height="1" fill="#2020a0"/><rect x="159" y="376" width="1" height="2" fill="#2020a0"/><rect x="159" y="217" width="1" height="1" fill="#2020a0"/><rect x="168" y="376" width="1" height="2" fill="#2020a0"/><rect x="168" y="217" width="1" height="1" fill="#2020a0"/><rect x="176" y="376" width="1" height="2" fill="#2020a0"/><rect x="176" y="217" width="1" height="1" fill="#2020a0"/><rect x="185" y="376" width="1" height="2" fill="#808080"/><rect x="185" y="217" width="1" height="1" fill="#808080"/><rect x="194" y="376" width="1" height="2" fill="#2020a0"/><rect x="194" y="217" width="1" height="1" fill="#2020a0"/><rect x="203" y="376" width="1" height="2" fill="#2020a0"/><rect x="203" y="217" width="1" height="1" fill="#2020a0"/><rect x="212" y="376" width="1" height="2" fill="#2020a0"/><rect x="212" y="217" width="1" height="1" fill="#2020a0"/><rect x="221" y="376" width="1" height="2" fill="#2020a0"/><rect x="221" y="217" width="1" height="1" fill="#2020a0"/><rect x="229" y="376" width="1" height="2" fill="#808080"/><rect x="229" y="217" width="1" height="1" fill="#808080"/><rect x="238" y="376" width="1" height="2" fill="#2020a0"/><rect x="238" y="217" width="1" height="1" fill="#2020a0"/><rect x="247" y="376" width="1" height="2" fill="#2020a0"/><rect x="247" y="217" width="1" height="1" fill="#2020a0"/><rect x="256" y="376" width="1" height="2" fill="#2020a0"/><rect x="256" y="217" width="1" height="1" fill="#2020a0"/><rect x="265" y="376" width="1" height="2" fill="#2020a0"/><rect x="265" y="217" width="1" height="1" fill="#2020a0"/><rect x="274" y="376" width="1" height="2" fill="#808080"/><rect x="274" y="217" width="1" height="1" fill="#808080"/><rect x="282" y="376" width="1" height="2" fill="#2020a0"/><rect x="282" y="217" width="1" height="1" fill="#2020a0"/><rect x="291" y="376" width="1" height="2" fill="#2020a0"/><rect x="291" y="217" width="1" height="1" fill="#2020a0"/><rect x="300" y="376" width="1" height="2" fill="#2020a0"/><rect x="300" y="217" width="1" height="1" fill="#2020a0"/><rect x="309" y="376" width="1" height="2" fill="#2020a0"/><rect x="309" y="217" width="1" height="1" fill="#2020a0"/><rect x="318" y="376" width="1" height="2" fill="#808080"/><rect x="318" y="217" width="1" height="1" fill="#808080"/><rect x="327" y="376" width="1" height="2" fill="#2020a0"/><rect x="327" y="217" width="1" height="1" fill="#2020a0"/><rect x="335" y="376" width="1" height="2" fill="#2020a0"/><rect x="335" y="217" width="1" height="1" fill="#2020a0"/><rect x="344" y="376" width="1" height="2" fill="#2020a0"/><rect x="344" y="217" width="1" height="1" fill="#2020a0"/><rect x="353" y="376" width="1" height="2" fill="#2020a0"/><rect x="353" y="217" width="1" height="1" fill="#2020a0"/><rect x="362" y="376" width="1" height="2" fill="#808080"/><rect x="362" y="217" width="1" height="1" fill="#808080"/><rect x="371" y="376" width="1" height="2" fill="#2020a0"/><rect x="371" y="217" width="1" height="1" fill="#2020a0"/><rect x="380" y="376" width="1" height="2" fill="#2020a0"/><rect x="380" y="217" width="1" height="1" fill="#2020a0"/><rect x="388" y="376" width="1" height="2" fill="#2020a0"/><rect x="388" y="217" width="1" height="1" fill="#2020a0"/><rect x="397" y="376" width="1" height="2" fill="#2020a0"/><rect x="397" y="217" width="1" height="1" fill="#2020a0"/><rect x="406" y="376" width="1" height="2" fill="#808080"/><rect x="406" y="217" width="1" height="1" fill="#808080"/><rect x="415" y="376" width="1" height="2" fill="#2020a0"/><rect x="415" y="217" width="1" height="1" fill="#2020a0"/><rect x="424" y="376" width="1" height="2" fill="#2020a0"/><rect x="424" y="217" width="1" height="1" fill="#2020a0"/><rect x="433" y="376" width="1" height="2" fill="#2020a0"/><rect x="433" y="217" width="1" height="1" fill="#2020a0"/><rect x="441" y="376" width="1" height="2" fill="#2020a0"/><rect x="441" y="217" width="1" height="1" fill="#2020a0"/></svg>
<div class="t ax" id="t0" style="right:585.6px;top:69.0px;transform-origin:100% 0;transform:scaleX(1.0077);">200</div><div class="t ax" id="t1" style="right:585.6px;top:97.1px;transform-origin:100% 0;transform:scaleX(1.0077);">160</div><div class="t ax" id="t2" style="right:585.6px;top:125.2px;transform-origin:100% 0;transform:scaleX(1.0077);">120</div><div class="t ax" id="t3" style="right:585.6px;top:153.3px;transform-origin:100% 0;transform:scaleX(1.0286);">80</div><div class="t ax" id="t4" style="right:585.6px;top:181.4px;transform-origin:100% 0;transform:scaleX(1.0286);">40</div><div class="t ax" id="t5" style="left:454.6px;top:69.0px;transform-origin:0 0;transform:scaleX(1.0286);">16</div><div class="t ax" id="t6" style="left:454.6px;top:86.6px;transform-origin:0 0;transform:scaleX(1.0286);">14</div><div class="t ax" id="t7" style="left:454.6px;top:104.1px;transform-origin:0 0;transform:scaleX(1.0286);">12</div><div class="t ax" id="t8" style="left:454.6px;top:121.7px;transform-origin:0 0;transform:scaleX(1.0286);">10</div><div class="t ax" id="t9" style="left:454.6px;top:139.2px;transform-origin:0 0;transform:scaleX(1.0939);">8</div><div class="t ax" id="t10" style="left:454.6px;top:156.8px;transform-origin:0 0;transform:scaleX(1.0939);">6</div><div class="t ax" id="t11" style="left:454.6px;top:174.4px;transform-origin:0 0;transform:scaleX(1.0939);">4</div><div class="t ax" id="t12" style="left:454.6px;top:191.9px;transform-origin:0 0;transform:scaleX(1.0939);">2</div><div class="t ax" id="t13" style="right:585.6px;top:230.0px;transform-origin:100% 0;transform:scaleX(1.0286);">20</div><div class="t ax" id="t14" style="left:454.6px;top:230.0px;transform-origin:0 0;transform:scaleX(1.0286);">20</div><div class="t ax" id="t15" style="right:585.6px;top:257.9px;transform-origin:100% 0;transform:scaleX(1.0286);">16</div><div class="t ax" id="t16" style="left:454.6px;top:257.9px;transform-origin:0 0;transform:scaleX(1.0286);">16</div><div class="t ax" id="t17" style="right:585.6px;top:285.8px;transform-origin:100% 0;transform:scaleX(1.0286);">12</div><div class="t ax" id="t18" style="left:454.6px;top:285.8px;transform-origin:0 0;transform:scaleX(1.0286);">12</div><div class="t ax" id="t19" style="right:585.6px;top:313.7px;transform-origin:100% 0;transform:scaleX(1.0939);">8</div><div class="t ax" id="t20" style="left:454.6px;top:313.7px;transform-origin:0 0;transform:scaleX(1.0939);">8</div><div class="t ax" id="t21" style="right:585.6px;top:341.6px;transform-origin:100% 0;transform:scaleX(1.0939);">4</div><div class="t ax" id="t22" style="left:454.6px;top:341.6px;transform-origin:0 0;transform:scaleX(1.0939);">4</div><div class="t ax" id="t23" style="left:47.9px;top:217.7px;transform-origin:0 0;transform:scaleX(1.0067);">0.0</div><div class="t ax" id="t24" style="left:47.9px;top:377.7px;transform-origin:0 0;transform:scaleX(1.0067);">0.0</div><div class="t ax" id="t25" style="left:92.0px;top:217.7px;transform-origin:0 0;transform:scaleX(1.0067);">0.5</div><div class="t ax" id="t26" style="left:92.0px;top:377.7px;transform-origin:0 0;transform:scaleX(1.0067);">0.5</div><div class="t ax" id="t27" style="left:136.2px;top:217.7px;transform-origin:0 0;transform:scaleX(1.0067);">1.0</div><div class="t ax" id="t28" style="left:136.2px;top:377.7px;transform-origin:0 0;transform:scaleX(1.0067);">1.0</div><div class="t ax" id="t29" style="left:180.3px;top:217.7px;transform-origin:0 0;transform:scaleX(1.0067);">1.5</div><div class="t ax" id="t30" style="left:180.3px;top:377.7px;transform-origin:0 0;transform:scaleX(1.0067);">1.5</div><div class="t ax" id="t31" style="left:224.5px;top:217.7px;transform-origin:0 0;transform:scaleX(1.0067);">2.0</div><div class="t ax" id="t32" style="left:224.5px;top:377.7px;transform-origin:0 0;transform:scaleX(1.0067);">2.0</div><div class="t ax" id="t33" style="left:268.6px;top:217.7px;transform-origin:0 0;transform:scaleX(1.0067);">2.5</div><div class="t ax" id="t34" style="left:268.6px;top:377.7px;transform-origin:0 0;transform:scaleX(1.0067);">2.5</div><div class="t ax" id="t35" style="left:312.8px;top:217.7px;transform-origin:0 0;transform:scaleX(1.0067);">3.0</div><div class="t ax" id="t36" style="left:312.8px;top:377.7px;transform-origin:0 0;transform:scaleX(1.0067);">3.0</div><div class="t ax" id="t37" style="left:356.9px;top:217.7px;transform-origin:0 0;transform:scaleX(1.0067);">3.5</div><div class="t ax" id="t38" style="left:356.9px;top:377.7px;transform-origin:0 0;transform:scaleX(1.0067);">3.5</div><div class="t ax" id="t39" style="left:401.1px;top:217.7px;transform-origin:0 0;transform:scaleX(1.0067);">4.0</div><div class="t ax" id="t40" style="left:401.1px;top:377.7px;transform-origin:0 0;transform:scaleX(1.0067);">4.0</div><div class="t ax" id="t41" style="left:445.2px;top:217.7px;transform-origin:0 0;transform:scaleX(1.0067);">4.5</div><div class="t ax" id="t42" style="left:445.2px;top:377.7px;transform-origin:0 0;transform:scaleX(1.0067);">4.5</div><div class="t gt" id="t43" style="left:486.1px;top:85.5px;transform-origin:0 0;transform:scaleX(0.9877);">Info o dysku</div><div class="t " id="t44" style="left:485.6px;top:98.5px;transform-origin:0 0;transform:scaleX(0.9761);">Typ:</div><div class="t v" id="t45" style="left:524.8px;top:98.5px;transform-origin:0 0;transform:scaleX(0.9895);">DVD+R</div><div class="t " id="t46" style="left:485.6px;top:115.5px;transform-origin:0 0;transform:scaleX(0.9316);">ID:</div><div class="t v" id="t47" style="left:524.8px;top:115.5px;transform-origin:0 0;transform:scaleX(0.9825);">MBIPG101 R03</div><div class="t " id="t48" style="left:485.6px;top:131.6px;transform-origin:0 0;transform:scaleX(0.9431);">Data:</div><div class="t v" id="t49" style="left:524.8px;top:131.6px;transform-origin:0 0;transform:scaleX(0.9550);">23 September</div><div class="t " id="t50" style="left:485.6px;top:147.2px;transform-origin:0 0;transform:scaleX(0.9372);">Label:</div><div class="t v" id="t51" style="left:524.8px;top:147.2px;transform-origin:0 0;transform:scaleX(0.9998);">TL_UNRATED</div><div class="t gt" id="t52" style="left:486.1px;top:163.6px;transform-origin:0 0;transform:scaleX(0.9736);">Settings</div><div class="t " id="t53" style="left:485.4px;top:182.9px;transform-origin:0 0;transform:scaleX(0.9791);">Prędkość</div><div class="t " id="t54" style="left:485.4px;top:209.4px;transform-origin:0 0;transform:scaleX(0.9923);">Początek</div><div class="t " id="t55" style="left:485.4px;top:233.7px;transform-origin:0 0;transform:scaleX(0.9839);">Koniec</div><div class="t " id="t56" style="left:540.8px;top:184.0px;transform-origin:0 0;transform:scaleX(1.0939);">4</div><div class="t xx" id="t57" style="left:548.1px;top:184.9px;transform-origin:0 0;transform:scaleX(1.0636);">×</div><div class="t " id="t58" style="left:539.7px;top:208.4px;transform-origin:0 0;transform:scaleX(0.9675);">0000 MB</div><div class="t " id="t59" style="left:539.7px;top:232.6px;transform-origin:0 0;transform:scaleX(0.9675);">4322 MB</div><div class="t " id="t60" style="left:501.1px;top:257.0px;transform-origin:0 0;transform:scaleX(1.0027);">Quick Scan</div><div class="t " id="t61" style="left:501.1px;top:277.5px;transform-origin:0 0;transform:scaleX(0.9767);">Show C1/PIE</div><div class="t " id="t62" style="left:501.1px;top:293.1px;transform-origin:0 0;transform:scaleX(0.9782);">Show C2/PIF</div><div class="t " id="t63" style="left:501.1px;top:309.7px;transform-origin:0 0;transform:scaleX(0.9628);">Show Jitter</div><div class="t " id="t64" style="left:501.1px;top:325.8px;transform-origin:0 0;transform:scaleX(0.9789);">Show Read Speed</div><div class="t dis" id="t65" style="left:501.1px;top:341.7px;transform-origin:0 0;transform:scaleX(0.9801);">Show Write Speed</div><div class="t " id="t66" style="left:485.1px;top:373.5px;transform-origin:0 0;transform:scaleX(0.9962);">Ocena jakość</div><div class="t v" id="t67" style="right:28.7px;top:373.5px;transform-origin:100% 0;transform:scaleX(1.0612);">93</div><div class="t " id="t68" style="left:485.1px;top:407.3px;transform-origin:0 0;transform:scaleX(0.9648);">Postęp:</div><div class="t " id="t69" style="left:485.1px;top:428.2px;transform-origin:0 0;transform:scaleX(0.9493);">Miejsce:</div><div class="t " id="t70" style="left:485.1px;top:446.8px;transform-origin:0 0;transform:scaleX(0.9696);">Prędk.:</div><div class="t v" id="t71" style="right:28.7px;top:407.3px;transform-origin:100% 0;transform:scaleX(0.9582);">100 %</div><div class="t v" id="t72" style="right:29.6px;top:428.2px;transform-origin:100% 0;transform:scaleX(0.9607);">4321 MB</div><div class="t v" id="t73" style="right:39.5px;top:446.8px;transform-origin:100% 0;transform:scaleX(1.0410);">4.12</div><div class="t v xx" id="t74" style="right:28.7px;top:447.6px;transform-origin:100% 0;transform:scaleX(1.0636);">×</div><div class="t " id="t75" style="left:483.8px;top:63.9px;transform-origin:0 0;transform:scaleX(1.0077);">Początek</div><div class="t " id="t76" style="left:564.1px;top:63.9px;transform-origin:0 0;transform:scaleX(1.0655);">Zakończ</div><div class="t " id="t77" style="left:19.6px;top:38.7px;transform-origin:0 0;transform:scaleX(0.9610);">Disc Quality</div><div class="t st" id="t78" style="left:36.5px;top:392.5px;transform-origin:0 0;transform:scaleX(0.9446);">PI Errors</div><div class="t st" id="t79" style="left:190.1px;top:392.5px;transform-origin:0 0;transform:scaleX(0.9434);">PI Failures</div><div class="t st" id="t80" style="left:342.2px;top:392.5px;transform-origin:0 0;transform:scaleX(0.9772);">Jitter</div><div class="t " id="t81" style="left:24.1px;top:408.3px;transform-origin:0 0;transform:scaleX(0.9418);">Średnio:</div><div class="t v" id="t82" style="right:480.9px;top:408.3px;transform-origin:100% 0;transform:scaleX(1.0207);">61.32</div><div class="t " id="t83" style="left:24.1px;top:427.9px;transform-origin:0 0;transform:scaleX(0.9300);">Maksimum:</div><div class="t v" id="t84" style="right:480.9px;top:427.9px;transform-origin:100% 0;transform:scaleX(1.0349);">162</div><div class="t " id="t85" style="left:24.1px;top:446.8px;transform-origin:0 0;transform:scaleX(0.9976);">Całość:</div><div class="t v" id="t86" style="right:480.9px;top:446.8px;transform-origin:100% 0;transform:scaleX(0.9968);">926035</div><div class="t " id="t87" style="left:178.8px;top:408.3px;transform-origin:0 0;transform:scaleX(0.9418);">Średnio:</div><div class="t v" id="t88" style="right:326.1px;top:408.3px;transform-origin:100% 0;transform:scaleX(1.0223);">1.06</div><div class="t " id="t89" style="left:178.8px;top:427.9px;transform-origin:0 0;transform:scaleX(0.9300);">Maksimum:</div><div class="t v" id="t90" style="right:326.1px;top:427.9px;transform-origin:100% 0;transform:scaleX(1.0694);">12</div><div class="t " id="t91" style="left:178.8px;top:446.8px;transform-origin:0 0;transform:scaleX(0.9976);">Całość:</div><div class="t v" id="t92" style="right:326.1px;top:446.8px;transform-origin:100% 0;transform:scaleX(0.9966);">7385</div><div class="t " id="t93" style="left:331.3px;top:408.3px;transform-origin:0 0;transform:scaleX(0.9418);">Średnio:</div><div class="t v" id="t94" style="right:173.3px;top:408.3px;transform-origin:100% 0;transform:scaleX(0.9858);">13.11 %</div><div class="t " id="t95" style="left:331.3px;top:427.9px;transform-origin:0 0;transform:scaleX(0.9300);">Maksimum:</div><div class="t v" id="t96" style="right:173.3px;top:427.9px;transform-origin:100% 0;transform:scaleX(0.9547);">16.4 %</div><div class="t " id="t97" style="left:331.3px;top:451.5px;transform-origin:0 0;transform:scaleX(0.9274);">PO Failures:</div><div class="t v" id="t98" style="right:173.3px;top:451.5px;transform-origin:100% 0;transform:scaleX(1.2082);">0</div>
</body></html>
